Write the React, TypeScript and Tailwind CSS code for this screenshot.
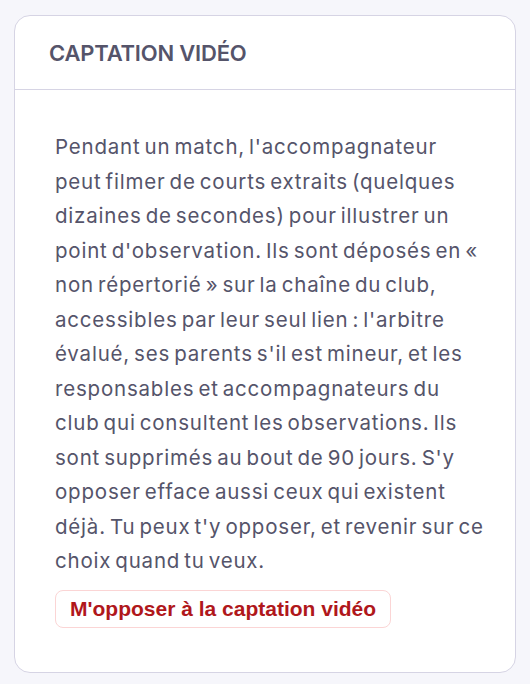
import React from 'react';

const lines = [
  "Pendant un match, l'accompagnateur",
  'peut filmer de courts extraits (quelques',
  'dizaines de secondes) pour illustrer un',
  "point d'observation. Ils sont déposés en «",
  'non répertorié » sur la chaîne du club,',
  "accessibles par leur seul lien : l'arbitre",
  "évalué, ses parents s'il est mineur, et les",
  'responsables et accompagnateurs du',
  'club qui consultent les observations. Ils',
  "sont supprimés au bout de 90 jours. S'y",
  'opposer efface aussi ceux qui existent',
  "déjà. Tu peux t'y opposer, et revenir sur ce",
  'choix quand tu veux.',
];

export default function App() {
  return (
    <div className="min-h-[684px] bg-[#f6f6fb] px-[14px] pt-[15px] pb-[14px] font-['Inter',sans-serif]">
      <div className="rounded-[16px] border border-[#d6d4e4] bg-white">
        <div className="flex h-[74px] items-center border-b border-[#d6d4e4] px-[34px] pt-[2px]">
          <h2 className="text-[22px] font-semibold tracking-[-0.2px] text-[#55546a]">CAPTATION VIDÉO</h2>
        </div>
        <div className="px-[40px] pt-[40px] pb-[44px]">
          <p className="text-[20.5px] leading-[34.5px] tracking-[0.8px] [word-spacing:-2.5px] text-[#55546a]">
            {lines.map((l) => (
              <span key={l} className="block whitespace-nowrap">{l}</span>
            ))}
          </p>
          <button className="mt-[11px] h-[38px] rounded-[8px] border border-[#fbd5d5] bg-white px-[14px] font-['Liberation_Sans',Arial,sans-serif] text-[21px] font-bold text-[#b0171b]">
            M'opposer à la captation vidéo
          </button>
        </div>
      </div>
    </div>
  );
}
